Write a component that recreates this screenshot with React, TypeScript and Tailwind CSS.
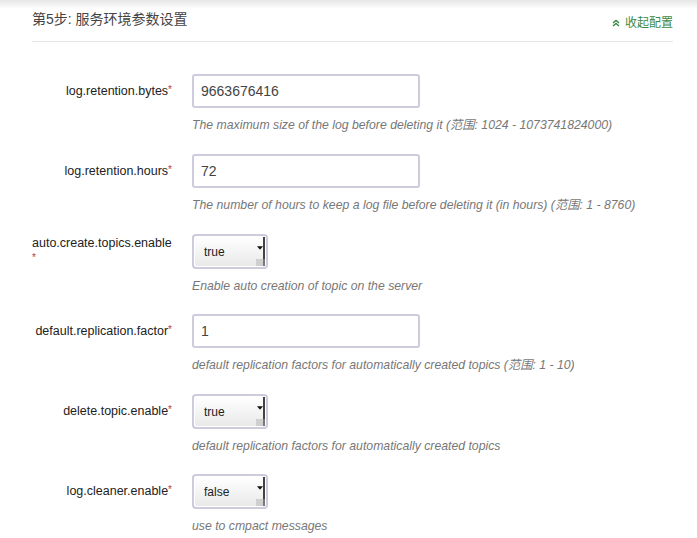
import { ReactNode } from "react";

const font = {
  fontFamily: '"Liberation Sans", Arial, "Noto Sans CJK SC", sans-serif',
};

interface RowProps {
  label: ReactNode;
  help: string;
  children: ReactNode;
}

function Star() {
  return <span className="relative top-[-1px] align-top text-[10px] text-[#c0392b]">*</span>;
}

function Row({ label, help, children }: RowProps) {
  return (
    <div className="flex h-[80px]">
      <div className="w-[140px] pt-[9px] text-right text-[12.5px] leading-[16px] text-[#222]">
        {label}
      </div>
      <div className="ml-[20px] flex flex-col">
        {children}
        <p className="mt-[10px] text-[12.25px] italic leading-[14px] text-[#777]">{help}</p>
      </div>
    </div>
  );
}

function TextInput({ value }: { value: string }) {
  return (
    <div className="flex h-[34px] w-[228px] items-center rounded-[3px] border-2 border-[#cdcbdc] bg-white px-[7px] text-[14px] text-[#444]">
      {value}
    </div>
  );
}

function Select({ value }: { value: string }) {
  return (
    <div className="flex h-[35px] w-[76px] rounded-[4px] border-2 border-[#cdcbdc] bg-white p-[1px]">
      <div className="flex flex-1 items-center rounded-l-[2px] bg-gradient-to-b from-white to-[#e9e9e9] pl-[9px] text-[12px] text-[#222]">
        {value}
      </div>
      <div className="flex w-[9px] flex-col bg-gradient-to-b from-white to-[#e9e9e9]">
        <div className="flex flex-1 items-center justify-start border-r-2 border-[#444]">
          <svg width="7" height="5" viewBox="0 0 7 5" className="ml-[1px] mt-[1px]">
            <path d="M0 0 H7 L3.5 4 Z" fill="#111" />
          </svg>
        </div>
        <div className="h-[7px] border-r-2 border-[#777] bg-[#cfcfcf]" />
      </div>
    </div>
  );
}

export default function App() {
  return (
    <div className="relative h-[538px] w-[697px] overflow-hidden bg-white" style={font}>
      <div className="absolute left-0 right-0 top-0 h-[9px] bg-gradient-to-b from-[#e6e6e6] to-white" />
      <div className="relative ml-[32px] mr-[24px]">
        <div className="flex h-[42px] items-end justify-between border-b border-[#e6e6e6] pb-[11px]">
          <h3 className="mb-[2px] text-[14px] leading-[18px] text-[#444]">第5步: 服务环境参数设置</h3>
          <a className="flex items-center gap-[5px] text-[12px] leading-[14px] text-[#3b8a46]">
            <svg width="8" height="8" viewBox="0 0 8 8">
              <path d="M1 4 L4 1.5 L7 4 M1 7 L4 4.5 L7 7" stroke="#3b8a46" strokeWidth="1.4" fill="none" />
            </svg>
            收起配置
          </a>
        </div>
        <div className="pt-[32px]">
          <Row
            label={<>log.retention.bytes<Star /></>}
            help="The maximum size of the log before deleting it (范围: 1024 - 1073741824000)"
          >
            <TextInput value="9663676416" />
          </Row>
          <Row
            label={<>log.retention.hours<Star /></>}
            help="The number of hours to keep a log file before deleting it (in hours) (范围: 1 - 8760)"
          >
            <TextInput value="72" />
          </Row>
          <Row
            label={
              <div className="-mt-[8px] text-left">
                auto.create.topics.enable
                <br />
                <Star />
              </div>
            }
            help="Enable auto creation of topic on the server"
          >
            <Select value="true" />
          </Row>
          <Row
            label={<>default.replication.factor<Star /></>}
            help="default replication factors for automatically created topics (范围: 1 - 10)"
          >
            <TextInput value="1" />
          </Row>
          <Row
            label={<>delete.topic.enable<Star /></>}
            help="default replication factors for automatically created topics"
          >
            <Select value="true" />
          </Row>
          <Row label={<>log.cleaner.enable<Star /></>} help="use to cmpact messages">
            <Select value="false" />
          </Row>
        </div>
      </div>
    </div>
  );
}
